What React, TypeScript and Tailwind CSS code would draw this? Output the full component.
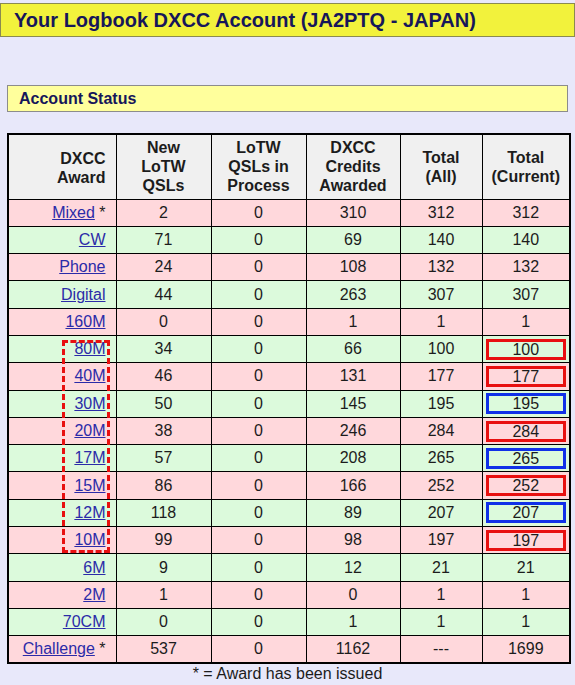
import React from "react";

const rows: [string, boolean, string, string, string, string, string, string?][] = [
  ["Mixed", true, "2", "0", "310", "312", "312"],
  ["CW", false, "71", "0", "69", "140", "140"],
  ["Phone", false, "24", "0", "108", "132", "132"],
  ["Digital", false, "44", "0", "263", "307", "307"],
  ["160M", false, "0", "0", "1", "1", "1"],
  ["80M", false, "34", "0", "66", "100", "100", "r"],
  ["40M", false, "46", "0", "131", "177", "177", "r"],
  ["30M", false, "50", "0", "145", "195", "195", "b"],
  ["20M", false, "38", "0", "246", "284", "284", "r"],
  ["17M", false, "57", "0", "208", "265", "265", "b"],
  ["15M", false, "86", "0", "166", "252", "252", "r"],
  ["12M", false, "118", "0", "89", "207", "207", "b"],
  ["10M", false, "99", "0", "98", "197", "197", "r"],
  ["6M", false, "9", "0", "12", "21", "21"],
  ["2M", false, "1", "0", "0", "1", "1"],
  ["70CM", false, "0", "0", "1", "1", "1"],
  ["Challenge", true, "537", "0", "1162", "---", "1699"],
];

export default function App() {
  return (
    <div className="w-[575px] h-[685px] bg-[#e8e8fa] overflow-hidden text-[#1c1c1c]" style={{ fontFamily: '"Liberation Sans", Arial, sans-serif' }}>
      <div className="pt-[3px]">
        <div className="h-[34px] bg-[#f2f23c] border border-[#8a8a50] flex items-center pl-[13px] text-[20px] font-bold text-[#16165a]">
          Your Logbook DXCC Account (JA2PTQ - JAPAN)
        </div>
      </div>
      <div className="mx-[7px] mt-[48px] h-[27px] bg-[#ffff9c] border border-[#8c8c8c] flex items-center pl-[11px] text-[16px] font-bold text-[#16165a]">
        Account Status
      </div>
      <div className="relative mx-[7px] mt-[21px]">
        <table className="w-[562px] border-collapse border-2 border-black text-[16px] table-fixed">
          <colgroup>
            <col className="w-[108px]" />
            <col className="w-[95px]" />
            <col className="w-[95px]" />
            <col className="w-[94px]" />
            <col className="w-[82px]" />
            <col className="w-[88px]" />
          </colgroup>
          <thead>
            <tr className="h-[65px] bg-[#f0f0f0] font-bold leading-[19px]">
              <th className="border border-black text-right pr-[10px] pt-[2px]">DXCC<br />Award</th>
              <th className="border border-black">New<br />LoTW<br />QSLs</th>
              <th className="border border-black">LoTW<br />QSLs in<br />Process</th>
              <th className="border border-black">DXCC<br />Credits<br />Awarded</th>
              <th className="border border-black">Total<br />(All)</th>
              <th className="border border-black">Total<br />(Current)</th>
            </tr>
          </thead>
          <tbody>
            {rows.map((r, i) => (
              <tr key={r[0]} className={`h-[27.3px] ${i % 2 === 0 ? "bg-[#ffd8dc]" : "bg-[#dcfadc]"}`}>
                <td className="border border-black text-right pr-[10px]">
                  <span className="underline text-[#2b2ba8]">{r[0]}</span>
                  {r[1] ? " *" : ""}
                </td>
                <td className="border border-black text-center">{r[2]}</td>
                <td className="border border-black text-center">{r[3]}</td>
                <td className="border border-black text-center">{r[4]}</td>
                <td className="border border-black text-center">{r[5]}</td>
                <td className="border border-black text-center px-[3px]">
                  {r[7] ? (
                    <div className={`h-[21px] leading-[16px] border-[3px] ${r[7] === "r" ? "border-[#e81010]" : "border-[#1030e8]"}`}>{r[6]}</div>
                  ) : (
                    r[6]
                  )}
                </td>
              </tr>
            ))}
          </tbody>
        </table>
        <div className="absolute left-[55px] top-[207px] w-[48px] h-[213px] border-[3px] border-dashed border-[#e81010]" />
        <div className="text-center text-[16px] leading-[18px] mt-[1px]">* = Award has been issued</div>
      </div>
    </div>
  );
}
